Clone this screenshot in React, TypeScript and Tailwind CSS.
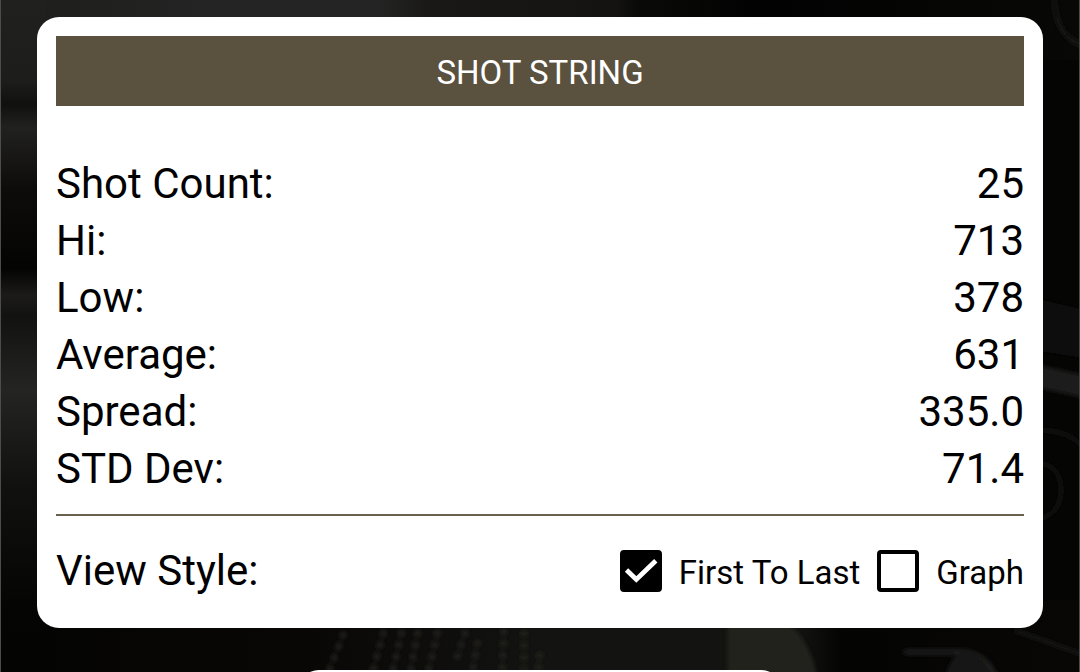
import { useState } from 'react';

const stats = [
  { label: 'Shot Count:', value: '25' },
  { label: 'Hi:', value: '713' },
  { label: 'Low:', value: '378' },
  { label: 'Average:', value: '631' },
  { label: 'Spread:', value: '335.0' },
  { label: 'STD Dev:', value: '71.4' },
];

interface CheckOptionProps {
  label: string;
  checked: boolean;
  onChange: () => void;
}

function CheckOption({ label, checked, onChange }: CheckOptionProps) {
  return (
    <label className="flex items-center gap-[17px] text-[33px] leading-[42px]">
      <span className="relative flex">
        <input
          type="checkbox"
          checked={checked}
          onChange={onChange}
          className="h-[42px] w-[42px] appearance-none rounded border-4 border-black bg-white checked:bg-black"
        />
        {checked && (
          <svg viewBox="0 0 42 42" className="pointer-events-none absolute inset-0 h-full w-full" fill="none">
            <path d="M6.5 20 L16.3 29.4 L35.8 10.8" stroke="white" strokeWidth="4.8" />
          </svg>
        )}
      </span>
      <span className="pt-1">{label}</span>
    </label>
  );
}

// Dark photo-like backdrop behind the cards
function Backdrop() {
  return (
    <svg
      viewBox="0 0 1080 672"
      preserveAspectRatio="none"
      aria-hidden="true"
      className="absolute inset-0 h-full w-full"
    >
      <defs>
        <linearGradient id="left" x1="0" y1="0" x2="0" y2="1">
          <stop offset="0" stopColor="#20201e" />
          <stop offset="0.12" stopColor="#1d1d1b" />
          <stop offset="0.155" stopColor="#10100e" />
          <stop offset="0.19" stopColor="#21211f" />
          <stop offset="0.28" stopColor="#0d0c0a" />
          <stop offset="0.4" stopColor="#040403" />
          <stop offset="0.44" stopColor="#1c1b1a" />
          <stop offset="0.47" stopColor="#121210" />
          <stop offset="0.58" stopColor="#242422" />
          <stop offset="0.72" stopColor="#11110f" />
          <stop offset="0.9" stopColor="#050503" />
          <stop offset="1" stopColor="#040403" />
        </linearGradient>
        <linearGradient id="top">
          <stop offset="0" stopColor="#1d1d1c" />
          <stop offset="0.2" stopColor="#232423" />
          <stop offset="0.35" stopColor="#232423" />
          <stop offset="0.4" stopColor="#191816" />
          <stop offset="0.57" stopColor="#141311" />
          <stop offset="0.59" stopColor="#0a0a09" />
          <stop offset="0.7" stopColor="#020202" />
          <stop offset="1" stopColor="#080807" />
        </linearGradient>
        <linearGradient id="bottom">
          <stop offset="0" stopColor="#040403" />
          <stop offset="0.28" stopColor="#080706" />
          <stop offset="0.5" stopColor="#131311" />
          <stop offset="0.74" stopColor="#131311" />
          <stop offset="0.78" stopColor="#040403" />
          <stop offset="1" stopColor="#080706" />
        </linearGradient>
        <filter id="soft">
          <feGaussianBlur stdDeviation="2" />
        </filter>
      </defs>
      <rect width="1080" height="672" fill="#050504" />
      <rect width="1080" height="60" fill="url(#top)" />
      <rect y="600" width="1080" height="72" fill="url(#bottom)" />
      <rect width="45" height="672" fill="url(#left)" />
      <g filter="url(#soft)">
        <path d="M728 620 H785 Q812 640 818 680 H728Z" fill="#20201f" />
        <path d="M1035 298 L1085 310 V358 L1035 350Z" fill="#10100e" />
        <path d="M1035 364 L1085 375 V398 L1035 387Z" fill="#1c1c1a" />
        <path d="M1035 430 Q1072 430 1082 446" stroke="#181816" strokeWidth="3" fill="none" />
        <path d="M1035 462 Q1062 464 1062 490 T1035 520" stroke="#141412" strokeWidth="3" fill="none" />
        <path d="M1055 0 Q1058 40 1085 45" stroke="#191917" strokeWidth="5" fill="none" />
        <path d="M905 652 H965 Q990 656 997 680" stroke="#1c1c1a" strokeWidth="6" fill="none" />
        <path d="M945 680 Q950 655 965 652 Q988 656 992 680Z" fill="#191917" />
        <path d="M1015 630 L1085 655" stroke="#1c1c1a" strokeWidth="3" />
        <g stroke="#20201f" strokeWidth="6" strokeDasharray="7 5">
          <path d="M344 632 L328 672" />
          <path d="M384 630 L372 672" />
          <path d="M402 630 L392 672" />
          <path d="M418 630 L410 672" />
          <path d="M438 630 L428 672" />
          <path d="M466 630 L456 660" />
          <path d="M478 640 L472 672" />
          <path d="M504 628 L502 672" />
          <path d="M524 630 L524 672" />
          <path d="M540 652 L538 672" />
        </g>
      </g>
    </svg>
  );
}

export default function App() {
  const [view, setView] = useState('list');

  return (
    <div className="relative h-screen overflow-hidden border-x border-[#4b4c4b] bg-[#050504] font-['Roboto',sans-serif] text-black">
      <Backdrop />

      <main className="relative flex flex-col px-9 pt-[17px]">
        <section className="rounded-[22px] bg-white p-[19px]">
          <h1 className="bg-[#5a513e] pt-4 pb-3 text-center text-[33px] leading-[42px] text-white">SHOT STRING</h1>

          {/* Shot statistics */}
          <dl className="mt-[49px] border-b-2 border-[#6a614f] pb-[17px] text-[42px] leading-[57px]">
            {stats.map((stat) => (
              <div key={stat.label} className="flex justify-between">
                <dt>{stat.label}</dt>
                <dd>{stat.value}</dd>
              </div>
            ))}
          </dl>

          {/* View style switch */}
          <div className="flex items-center justify-between pt-[26px] pb-[10px]">
            <h2 className="text-[42px] leading-[57px]">View Style:</h2>
            <div className="flex items-center gap-[17px]">
              <CheckOption label="First To Last" checked={view === 'list'} onChange={() => setView('list')} />
              <CheckOption label="Graph" checked={view === 'graph'} onChange={() => setView('graph')} />
            </div>
          </div>
        </section>

        {/* Next card, cut off by the bottom of the screen */}
        <section className="mt-[42px] h-40 w-[486px] self-center rounded-[22px] bg-white" />
      </main>
    </div>
  );
}
